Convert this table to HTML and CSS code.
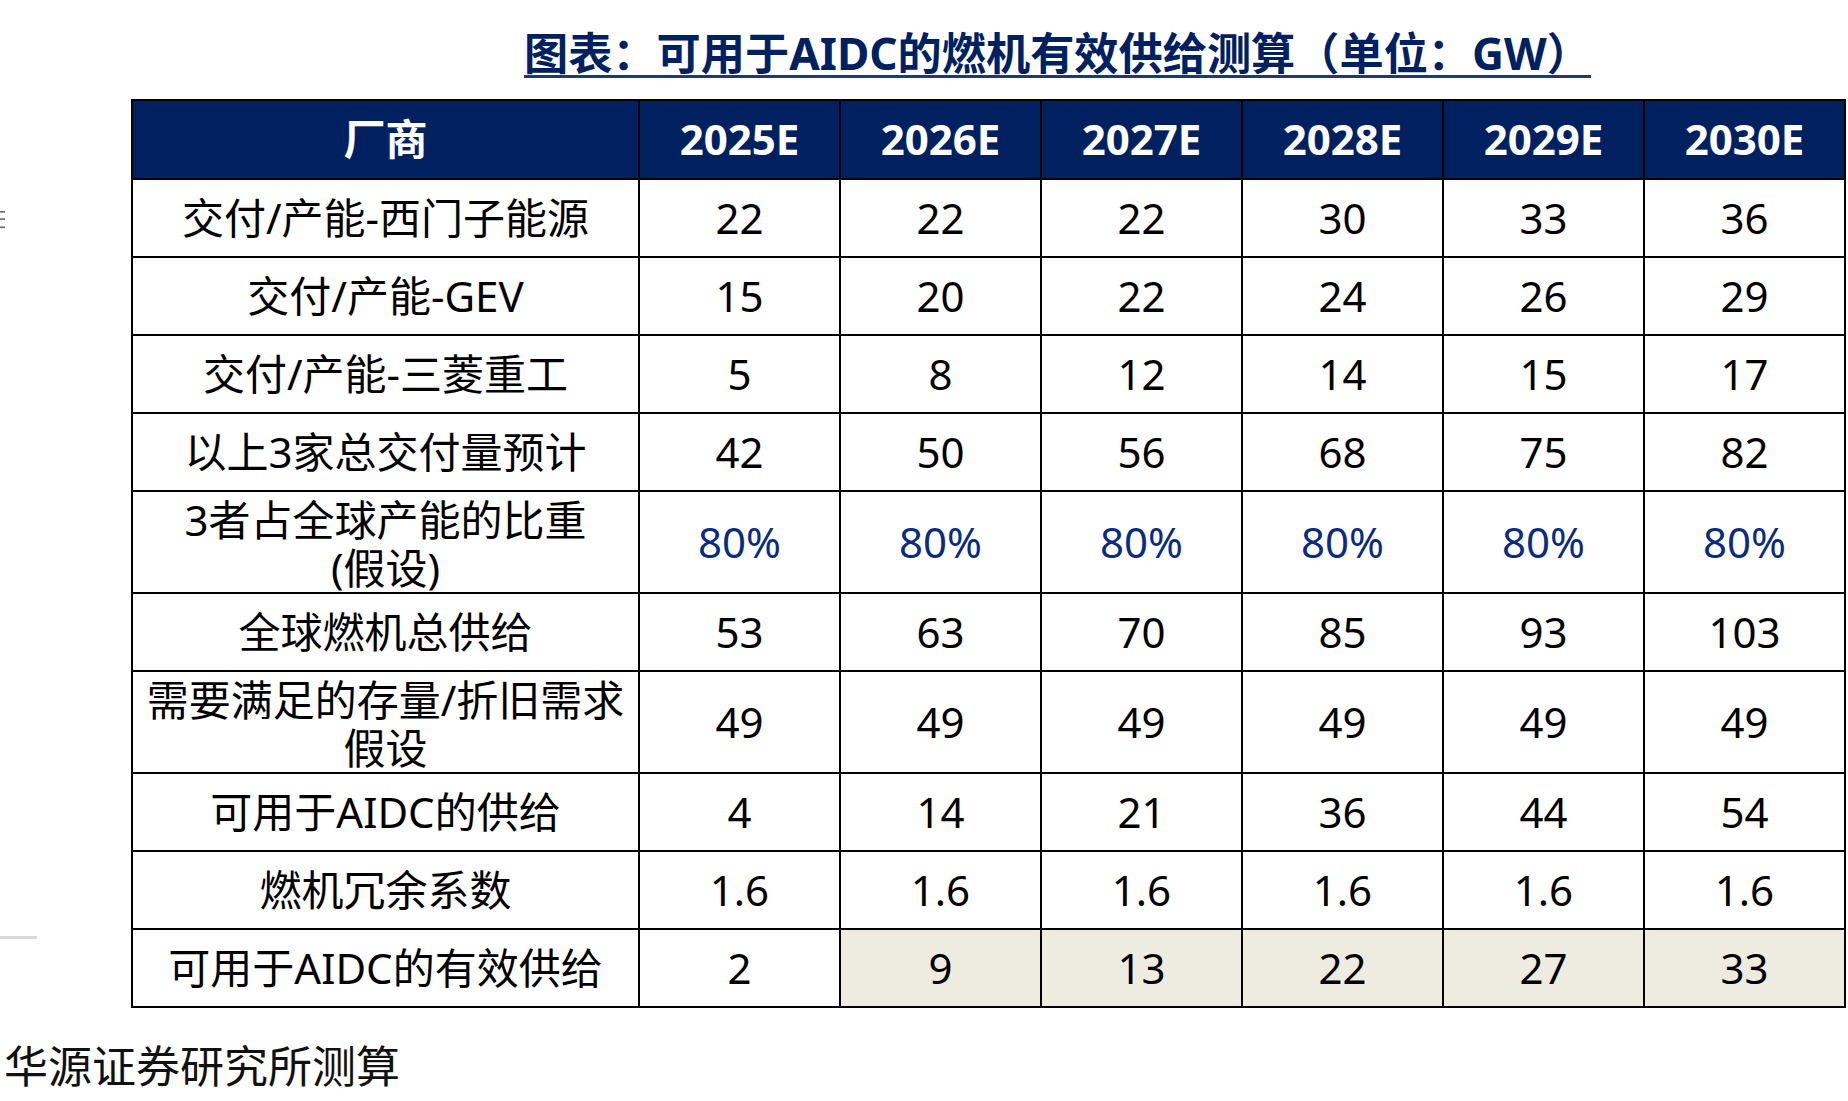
FILE: index.html
```html
<!DOCTYPE html>
<html lang="zh-CN">
<head>
<meta charset="utf-8">
<title>图表：可用于AIDC的燃机有效供给测算</title>
<link rel="stylesheet" href="styles.css">
</head>
<body>
<div class="page">
  <header class="title-wrap">
    <h1 class="title">图表：可用于AIDC的燃机有效供给测算（单位：GW）</h1>
  </header>
  <div class="main">
    <div class="gutter">
      <svg class="glyph-frag" width="6" height="19" viewBox="0 0 6 19" aria-hidden="true">
        <rect x="0" y="1" width="5" height="1.6" fill="#6b6b6b"/>
        <rect x="0" y="8.3" width="5" height="1.6" fill="#6b6b6b"/>
        <rect x="0" y="16.5" width="5" height="1.6" fill="#6b6b6b"/>
      </svg>
      <div class="gutter-rule"></div>
    </div>
    <table class="supply">
      <colgroup>
        <col class="c-name">
        <col><col><col><col><col><col>
      </colgroup>
      <thead>
        <tr class="head">
          <th>厂商</th><th>2025E</th><th>2026E</th><th>2027E</th><th>2028E</th><th>2029E</th><th>2030E</th>
        </tr>
      </thead>
      <tbody>
        <tr><td>交付/产能-西门子能源</td><td>22</td><td>22</td><td>22</td><td>30</td><td>33</td><td>36</td></tr>
        <tr><td>交付/产能-GEV</td><td>15</td><td>20</td><td>22</td><td>24</td><td>26</td><td>29</td></tr>
        <tr><td>交付/产能-三菱重工</td><td>5</td><td>8</td><td>12</td><td>14</td><td>15</td><td>17</td></tr>
        <tr><td>以上3家总交付量预计</td><td>42</td><td>50</td><td>56</td><td>68</td><td>75</td><td>82</td></tr>
        <tr class="tall"><td class="two-line">3者占全球产能的比重<br>(假设)</td><td class="pct">80%</td><td class="pct">80%</td><td class="pct">80%</td><td class="pct">80%</td><td class="pct">80%</td><td class="pct">80%</td></tr>
        <tr><td>全球燃机总供给</td><td>53</td><td>63</td><td>70</td><td>85</td><td>93</td><td>103</td></tr>
        <tr class="tall"><td class="two-line">需要满足的存量/折旧需求<br>假设</td><td>49</td><td>49</td><td>49</td><td>49</td><td>49</td><td>49</td></tr>
        <tr><td>可用于AIDC的供给</td><td>4</td><td>14</td><td>21</td><td>36</td><td>44</td><td>54</td></tr>
        <tr><td>燃机冗余系数</td><td>1.6</td><td>1.6</td><td>1.6</td><td>1.6</td><td>1.6</td><td>1.6</td></tr>
        <tr><td>可用于AIDC的有效供给</td><td>2</td><td class="shade">9</td><td class="shade">13</td><td class="shade">22</td><td class="shade">27</td><td class="shade">33</td></tr>
      </tbody>
    </table>
  </div>
  <p class="source">华源证券研究所测算</p>
</div>
</body>
</html>
```

FILE: styles.css
```css
html, body {
  margin: 0;
  padding: 0;
  background: #ffffff;
}

body {
  width: 1848px;
  height: 1101px;
  overflow: hidden;
  font-family: "Noto Sans", "Noto Sans CJK SC", sans-serif;
  color: #000;
}

.page {
  display: flex;
  flex-direction: column;
}

.title-wrap {
  padding-top: 31px;
  padding-left: 524px;
}

.title {
  display: inline-block;
  margin: 0;
  font-size: 44.2px;
  line-height: 44px;
  font-weight: 700;
  color: #002060;
  border-bottom: 3px solid #1f3a72;
  white-space: nowrap;
}

.main {
  display: flex;
  align-items: flex-start;
  margin-top: 21px;
}

.gutter {
  width: 131px;
  flex: none;
  display: flex;
  flex-direction: column;
}

.glyph-frag {
  display: block;
  margin-top: 111px;
}

.gutter-rule {
  width: 37px;
  height: 3px;
  margin-top: 707px;
  background: #d9d9d9;
}

.supply {
  border-collapse: collapse;
  table-layout: fixed;
  width: 1715px;
  flex: none;
}

.supply .c-name {
  width: 507px;
}

.supply th,
.supply td {
  border: 2px solid #000;
  padding: 0;
  text-align: center;
  vertical-align: middle;
  font-size: 42px;
  line-height: 50px;
  white-space: nowrap;
}

.supply tr {
  height: 78px;
}

.supply tr.head {
  height: 78.5px;
}

.supply tr.tall {
  height: 102px;
}

.supply th {
  background: #002060;
  color: #ffffff;
  font-weight: 700;
}

.supply td {
  font-weight: 400;
  color: #000;
}

.supply td.two-line {
  padding-top: 4px;
  line-height: 48px;
}

.supply td.pct {
  color: #0b2c7c;
}

.supply td.shade {
  background: #eeece1;
}

.source {
  margin: 36px 0 0 4px;
  font-size: 44px;
  line-height: 44px;
  color: #111;
  white-space: nowrap;
}
```
